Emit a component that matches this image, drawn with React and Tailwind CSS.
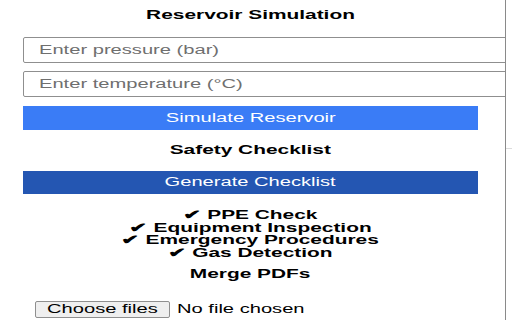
import React from 'react';

const items = ['PPE Check', 'Equipment Inspection', 'Emergency Procedures', 'Gas Detection'];

// the capture is stretched sideways, so text is widened to match
const Wide = ({ children, bold, left }) => (
  <span className={`inline-block whitespace-nowrap ${bold ? 'scale-x-[1.67]' : 'scale-x-[1.61]'} ${left ? 'origin-left' : 'origin-center'}`}>
    {children}
  </span>
);

const Field = ({ label }) => (
  <div className="relative mt-[8px] first:mt-[14px] w-[500px] h-[26px]">
    <input aria-label={label} className="block w-full h-full border border-[#8f8f8f] rounded-[2px] outline-none bg-white" />
    <span className="absolute left-[16px] top-0 leading-[26px] text-[12.5px] text-[#6f6f6f] pointer-events-none">
      <Wide left>{label}</Wide>
    </span>
  </div>
);

export default function App() {
  return (
    <div className="flex w-[512px] h-[320px] bg-white overflow-hidden font-['Liberation_Sans',Arial,sans-serif] text-black">
      <div className="w-[506px] shrink-0 border-r border-[#8a8a8a] overflow-hidden">
        <div className="w-[455px] ml-[23px]">
          <h1 className="pt-[8px] text-center text-[12.5px] leading-[15px] font-bold">
            <Wide bold>Reservoir Simulation</Wide>
          </h1>

          <div>
            <Field label="Enter pressure (bar)" />
            <Field label="Enter temperature (°C)" />
          </div>

          <button className="block mt-[9px] w-full h-[24px] bg-[#3a7cf6] text-white text-[12.5px] leading-[24px] text-center">
            <Wide>Simulate Reservoir</Wide>
          </button>

          <h2 className="mt-[13px] text-center text-[12.5px] leading-[15px] font-bold">
            <Wide bold>Safety Checklist</Wide>
          </h2>

          <button className="block mt-[13px] w-full h-[23px] bg-[#2456b2] text-white text-[12.5px] leading-[23px] text-center">
            <Wide>Generate Checklist</Wide>
          </button>

          <ul className="mt-[15px] text-center text-[12.5px] leading-[12.5px] font-bold">
            {items.map(item => (
              <li key={item}>
                <Wide bold>✔ {item}</Wide>
              </li>
            ))}
          </ul>

          <h2 className="mt-[8px] text-center text-[12.5px] leading-[15px] font-bold">
            <Wide bold>Merge PDFs</Wide>
          </h2>

          <div className="mt-[19px] ml-[12px] flex items-center text-[12.5px]">
            <span className="w-[135px] h-[17px] border border-[#8f8f8f] rounded-[2px] bg-[#efefef] leading-[15px] text-center">
              <Wide>Choose files</Wide>
            </span>
            <span className="ml-[7px] leading-[17px]">
              <Wide left>No file chosen</Wide>
            </span>
          </div>
        </div>
      </div>
      <div className="flex-1 pt-[148px]">
        <div className="h-px bg-[#dcdcdc]" />
      </div>
    </div>
  );
}
